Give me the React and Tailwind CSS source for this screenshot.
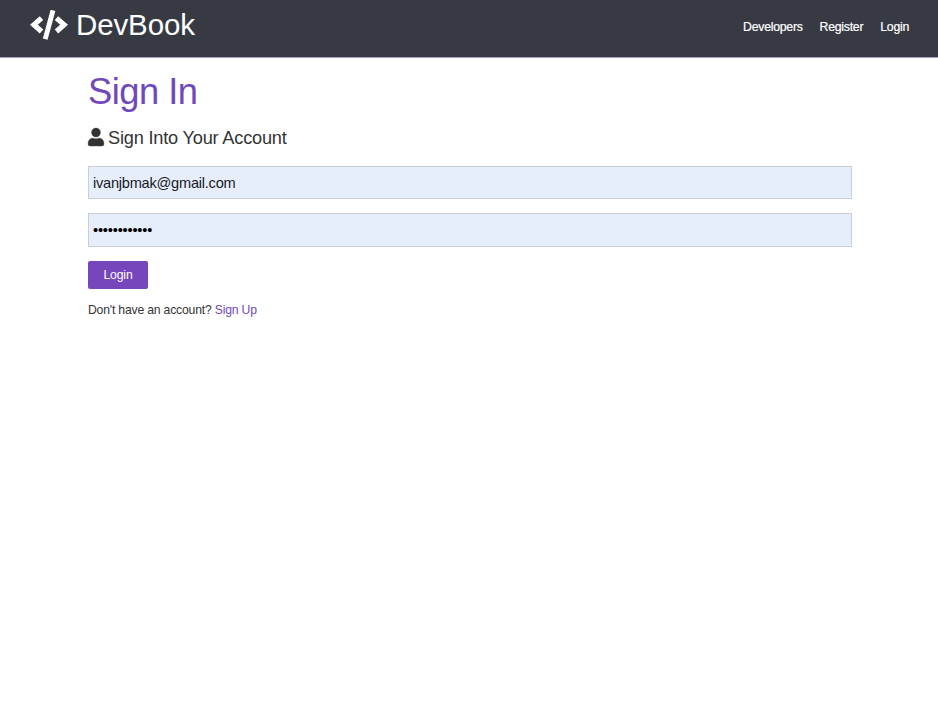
import { FaUser } from "react-icons/fa";

const links = ["Developers", "Register", "Login"];

function CodeIcon() {
  return (
    <svg className="h-[30px] w-[38px]" viewBox="0 0 38 30" fill="none" stroke="currentColor" strokeWidth="5.2" strokeLinejoin="miter">
      <path d="M11.5 8.1 3.9 14.8 11.5 21.5" />
      <path d="M26.5 8.1 34.1 14.8 26.5 21.5" />
      <path d="M23 0.4 15.2 29.1" strokeWidth="4.9" />
    </svg>
  );
}

export default function App() {
  return (
    <div className="min-h-screen bg-white font-['Liberation_Sans',Arial,sans-serif] text-[#333]">
      <nav className="flex h-[58px] items-center justify-between border-b border-[#a49cc0] bg-[#373a42] pr-[29px] pl-[30px] text-white">
        <a className="flex items-center gap-[8px] pb-[8px] text-[29.5px] leading-none tracking-[-0.12px]">
          <CodeIcon />
          <span>DevBook</span>
        </a>
        <ul className="flex gap-[17px] pb-[3px] text-[12.3px] tracking-[-0.27px] [-webkit-text-stroke:0.2px_white]">
          {links.map((label) => (
            <li key={label}>{label}</li>
          ))}
        </ul>
      </nav>
      <main className="pt-[12px] pr-[86px] pl-[88px]">
        <h1 className="text-[36.3px] leading-[44px] tracking-[-0.5px] text-[#7148bc]">Sign In</h1>
        <p className="mt-[12px] flex h-[24px] items-center gap-[4px] text-[18.2px] tracking-[-0.2px]">
          <FaUser className="mb-[2px] h-[18px] w-[16px] overflow-visible stroke-[#333] stroke-[10]" />
          <span className="pt-px">Sign Into Your Account</span>
        </p>
        <form>
          <input className="mt-[16px] block h-[33px] w-full border border-[#ccced6] bg-[#e7eefb] px-[4px] text-[14.6px] tracking-[-0.24px] text-[#171a26] outline-none" type="email" defaultValue="ivanjbmak@gmail.com" />
          <input className="mt-[14px] block h-[34px] w-full border border-[#ccced6] bg-[#e7eefb] px-[4px] text-[14.6px] tracking-[-0.18px] text-black outline-none" type="password" defaultValue="abcdefghijkl" />
          <button type="button" className="mt-[14px] block h-[28px] w-[60px] rounded-[2px] bg-[#7646bc] text-[12.2px] tracking-[-0.15px] text-white">Login</button>
        </form>
        <p className="mt-[12px] text-[12.2px] leading-[18px] tracking-[-0.19px]">
          Don't have an account? <a className="text-[#7148bc]">Sign Up</a>
        </p>
      </main>
    </div>
  );
}
